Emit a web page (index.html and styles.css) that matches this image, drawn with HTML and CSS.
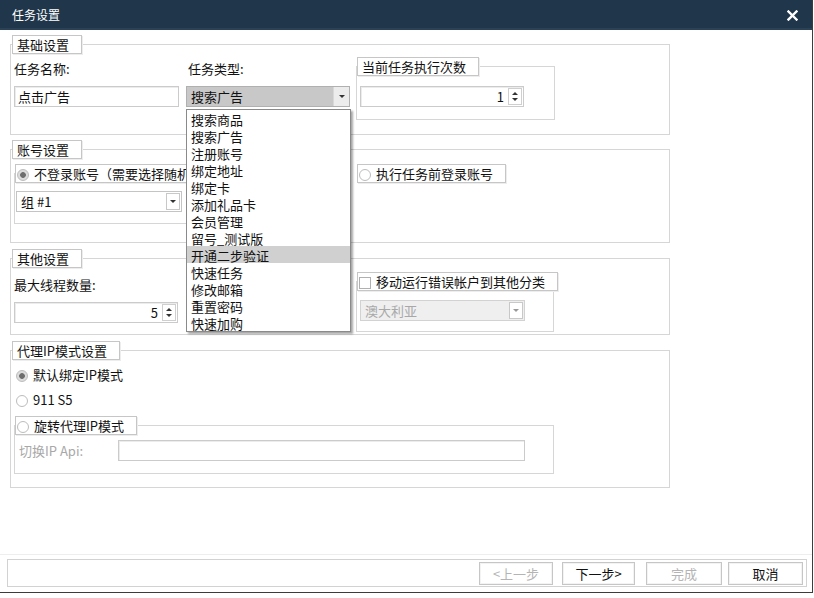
FILE: index.html
```html
<!DOCTYPE html>
<html lang="zh-CN">
<head>
  <meta charset="UTF-8" />
  <title>任务设置</title>
  <link rel="stylesheet" href="styles.css">
</head>
<body>

<div class="dialog">
  <div class="titlebar">
    <span class="title">任务设置</span>
    <svg class="close" width="11" height="11" viewBox="0 0 11 11">
      <path d="M1.5 1.5l8 8M9.5 1.5l-8 8" stroke="#fff" stroke-width="2.4" stroke-linecap="square"/>
    </svg>
  </div>

  <div class="content">
    <!-- 基础设置 -->
    <fieldset class="group main basic">
      <legend class="tab">基础设置</legend>
      <div class="row">
        <div class="col name-col">
          <div class="label">任务名称:</div>
          <div class="input name-input">点击广告</div>
        </div>
        <div class="col type-col">
          <div class="label">任务类型:</div>
          <div class="combo focused type-combo">
            <span class="value">搜索广告</span>
            <span class="drop"><i class="arrow"></i></span>
            <ul class="popup">
              <li>搜索商品</li>
              <li>搜索广告</li>
              <li>注册账号</li>
              <li>绑定地址</li>
              <li>绑定卡</li>
              <li>添加礼品卡</li>
              <li>会员管理</li>
              <li>留号_测试版</li>
              <li class="hover">开通二步验证</li>
              <li>快速任务</li>
              <li>修改邮箱</li>
              <li>重置密码</li>
              <li>快速加购</li>
            </ul>
          </div>
        </div>
        <fieldset class="group sub count-box">
          <legend class="tab">当前任务执行次数</legend>
          <div class="spin count-spin">
            <span class="value">1</span>
            <span class="spin-btns"><i class="up"></i><i class="down"></i></span>
          </div>
        </fieldset>
      </div>
    </fieldset>

    <!-- 账号设置 -->
    <fieldset class="group main account">
      <legend class="tab">账号设置</legend>
      <div class="row">
        <fieldset class="group sub nologin">
          <legend class="tab radio-tab"><i class="radio checked"></i>不登录账号（需要选择随机</legend>
          <div class="combo group-combo">
            <span class="value">组 #1</span>
            <span class="drop boxed"><i class="arrow"></i></span>
          </div>
        </fieldset>
        <fieldset class="group sub login">
          <legend class="tab radio-tab"><i class="radio"></i>执行任务前登录账号</legend>
        </fieldset>
      </div>
    </fieldset>

    <!-- 其他设置 -->
    <fieldset class="group main other">
      <legend class="tab">其他设置</legend>
      <div class="row">
        <div class="col thread-col">
          <div class="label">最大线程数量:</div>
          <div class="spin thread-spin">
            <span class="value">5</span>
            <span class="spin-btns"><i class="up"></i><i class="down"></i></span>
          </div>
        </div>
        <fieldset class="group sub move-box">
          <legend class="tab check-tab"><i class="checkbox"></i>移动运行错误帐户到其他分类</legend>
          <div class="combo disabled country-combo">
            <span class="value">澳大利亚</span>
            <span class="drop boxed"><i class="arrow"></i></span>
          </div>
        </fieldset>
      </div>
    </fieldset>

    <!-- 代理IP模式设置 -->
    <fieldset class="group main proxy">
      <legend class="tab">代理IP模式设置</legend>
      <div class="proxy-body">
        <div class="radio-row"><i class="radio checked"></i>默认绑定IP模式</div>
        <div class="radio-row second"><i class="radio"></i>911 S5</div>
        <fieldset class="group sub rotate-box">
          <legend class="tab radio-tab"><i class="radio"></i>旋转代理IP模式</legend>
          <div class="api-row">
            <span class="api-label">切换IP Api:</span>
            <div class="input api-input"></div>
          </div>
        </fieldset>
      </div>
    </fieldset>

    <div class="footer">
      <div class="button-bar">
        <button class="btn prev" disabled>&lt;上一步</button>
        <button class="btn next">下一步&gt;</button>
        <button class="btn finish" disabled>完成</button>
        <button class="btn cancel">取消</button>
      </div>
    </div>
  </div>
</div>

</body>
</html>
```

FILE: styles.css
```css
/* Base */
* {
  box-sizing: border-box;
}

body {
  margin: 0;
  font-family: "Noto Sans CJK SC", "Liberation Sans", sans-serif;
  font-size: 13px;
  line-height: 17px;
  color: #111;
  background: #fff;
}

.dialog {
  width: 813px;
  height: 593px;
  border-right: 1px solid #3c3c3c;
  border-bottom: 1px solid #3c3c3c;
  display: flex;
  flex-direction: column;
}

/* Title bar */
.titlebar {
  height: 30px;
  flex: none;
  background: #20364a;
  border-bottom: 2px solid #2b4256;
  color: #fff;
  font-size: 12px;
  display: flex;
  align-items: center;
  justify-content: space-between;
  padding: 0 14px 0 12px;
}

.close {
  margin-top: 3px;
}

.content {
  flex: 1;
  display: flex;
  flex-direction: column;
}

/* Group boxes */
.group {
  margin: 0;
  padding: 0;
  min-width: 0;
  border: 1px solid #d6d6d6;
}

.group.main {
  width: 660px;
  margin-left: 10px;
}

.tab {
  margin-left: 1px;
  padding: 0 12px 0 4px;
  border: 1px solid #c6c6c6;
  background: #fff;
  line-height: 17px;
  white-space: nowrap;
  box-shadow: 1px 1px 0 #ededed;
}

.sub > .tab {
  margin-left: 0;
}

.row {
  display: flex;
  align-items: flex-start;
}

.label {
  margin-bottom: 9px;
}

/* Inputs */
.input {
  height: 21px;
  border: 1px solid #cbcbcb;
  box-shadow: inset 1px 1px 0 #ececec;
  padding: 0 3px;
  line-height: 19px;
  background: #fff;
}

.combo {
  position: relative;
  display: flex;
  height: 21px;
  border: 1px solid #c4c4c4;
  background: #fff;
  line-height: 19px;
}

.combo .value {
  flex: 1;
  padding-left: 4px;
}

.combo .drop {
  width: 16px;
  display: flex;
  align-items: center;
  justify-content: center;
  background: #ececec;
  border-left: 1px solid #d8d8d8;
}

.combo .drop.boxed {
  background: #fff;
  border: 1px solid #c8c8c8;
  margin: 1px;
  width: 14px;
}

.arrow {
  width: 0;
  height: 0;
  border-left: 3px solid transparent;
  border-right: 3px solid transparent;
  border-top: 3px solid #333;
}

.combo.focused {
  background: #c8c8c8;
  border-color: #b0b0b0;
}

.combo.disabled {
  background: #efefef;
  border-color: #d2d2d2;
  color: #a8a8a8;
}

.combo.disabled .arrow {
  border-top-color: #999;
}

/* Dropdown list */
.popup {
  position: absolute;
  left: -1px;
  top: 22px;
  width: 165px;
  margin: 0;
  padding: 0;
  list-style: none;
  background: #fff;
  color: #111;
  border: 1px solid #8a8a8a;
  box-shadow: 2px 2px 2px rgba(0, 0, 0, 0.35);
  z-index: 10;
}

.popup li {
  height: 17px;
  padding-left: 4px;
}

.popup li.hover {
  background: #d0d0d0;
}

/* Spin box */
.spin {
  display: flex;
  height: 21px;
  border: 1px solid #cbcbcb;
  box-shadow: inset 1px 1px 0 #ececec;
  background: #fff;
  line-height: 19px;
}

.spin .value {
  flex: 1;
  text-align: right;
  padding-right: 3px;
}

.spin-btns {
  width: 14px;
  margin: 1px;
  border: 1px solid #cfcfcf;
  display: flex;
  flex-direction: column;
  align-items: center;
  justify-content: space-around;
  padding: 2px 0;
}

.spin-btns .up {
  border-left: 3px solid transparent;
  border-right: 3px solid transparent;
  border-bottom: 3px solid #333;
}

.spin-btns .down {
  border-left: 3px solid transparent;
  border-right: 3px solid transparent;
  border-top: 3px solid #333;
}

/* Radio / checkbox */
.radio {
  display: inline-block;
  width: 12px;
  height: 12px;
  margin-right: 5px;
  vertical-align: -2px;
  border: 1px solid #bcbcbc;
  border-radius: 50%;
  background: #fff;
}

.radio.checked {
  background: radial-gradient(circle, #6e6e6e 0 2.5px, #dcdcdc 3.2px);
}

.checkbox {
  display: inline-block;
  width: 12px;
  height: 12px;
  margin-right: 5px;
  vertical-align: -2px;
  border: 1px solid #b0b0b0;
  background: #fff;
}

.radio-tab,
.check-tab {
  padding-left: 1px;
}

/* 基础设置 */
.basic {
  margin-top: 5px;
}

.basic .row {
  padding-left: 3px;
}

.name-col {
  width: 172px;
  padding: 6px 0 27px;
}

.name-input {
  width: 165px;
}

.type-col {
  width: 170px;
  padding-top: 6px;
}

.type-col .label {
  padding-left: 2px;
}

.type-combo {
  width: 164px;
}

.count-box {
  width: 199px;
  margin-top: 3px;
}

.count-spin {
  width: 164px;
  margin: 10px 0 12px 3px;
}

/* 账号设置 */
.account {
  margin-top: 5px;
}

.account .row {
  padding: 5px 0 18px 3px;
  gap: 6px;
}

.nologin {
  width: 336px;
}

/* the rest of this label sits under the open dropdown */
.nologin > .tab {
  width: 172px;
  overflow: hidden;
  padding-right: 0;
}

.group-combo {
  width: 166px;
  margin: 8px 0 11px 1px;
}

.login {
  width: 199px;
  border-color: transparent;
}

/* 其他设置 */
.other {
  margin-top: 6px;
}

.other .row {
  padding-left: 3px;
}

.thread-col {
  width: 342px;
  padding: 8px 0 11px;
}

.thread-spin {
  width: 164px;
}

.move-box {
  width: 198px;
  margin-top: 4px;
}

.country-combo {
  width: 165px;
  margin: 9px 0 10px 3px;
}

/* 代理IP模式设置 */
.proxy {
  margin-top: 6px;
}

.proxy-body {
  padding: 6px 0 13px 3px;
}

.radio-row {
  padding-left: 2px;
  height: 17px;
}

.radio-row.second {
  margin-top: 8px;
}

.rotate-box {
  width: 540px;
  margin-top: 8px;
}

.api-row {
  display: flex;
  align-items: center;
  margin: 5px 0 12px 4px;
}

.api-label {
  width: 99px;
  color: #a8a8a8;
}

.api-input {
  width: 407px;
}

/* Footer buttons */
.footer {
  margin-top: auto;
  border-top: 1px solid #eeeeee;
  padding: 4px 0 5px 7px;
}

.button-bar {
  width: 800px;
  height: 28px;
  border: 1px solid #d2d2d2;
  display: flex;
  justify-content: flex-end;
  align-items: center;
  padding-right: 3px;
}

.btn {
  height: 23px;
  padding: 0;
  font-family: inherit;
  font-size: 13px;
  color: #111;
  background: #fff;
  border: 1px solid #c6c6c6;
  box-shadow: inset 0 0 0 1px #f3f3f3;
}

.btn:disabled {
  color: #b4b4b4;
}

.prev {
  width: 74px;
}

.next {
  width: 73px;
  margin-left: 9px;
}

.finish {
  width: 76px;
  margin-left: 11px;
}

.cancel {
  width: 75px;
  margin-left: 6px;
}
```
